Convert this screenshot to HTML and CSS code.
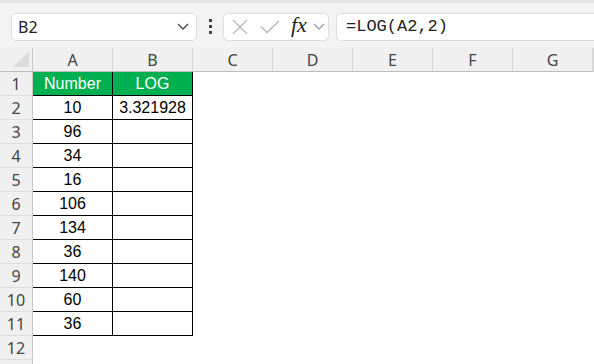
FILE: index.html
```html
<!DOCTYPE html>
<html lang="en">
<head>
  <meta charset="UTF-8">
  <title>LOG</title>
  <link rel="stylesheet" href="styles.css">
</head>
<body>
  <div class="toolbar">
    <div class="name-box">
      <span>B2</span>
      <svg class="chev" width="12" height="7" viewBox="0 0 12 7"><path d="M1 1 L6 6 L11 1" fill="none" stroke="#444" stroke-width="1.3"/></svg>
    </div>
    <div class="dots"><i></i><i></i><i></i></div>
    <div class="fx-box">
      <svg width="16" height="16" viewBox="0 0 16 16"><path d="M1 1 L15 15 M15 1 L1 15" stroke="#b5b5b5" stroke-width="1.3"/></svg>
      <svg class="check" width="20" height="14" viewBox="0 0 20 14"><path d="M1 6.5 L7 12.5 L19 1" fill="none" stroke="#b5b5b5" stroke-width="1.3"/></svg>
      <span class="fx">fx</span>
      <svg width="12" height="7" viewBox="0 0 12 7"><path d="M1 1 L6 6 L11 1" fill="none" stroke="#999" stroke-width="1.2"/></svg>
    </div>
    <div class="formula">=LOG(A2,2)</div>
  </div>

  <div class="sheet" id="sheet"></div>

  <script>
    const data = [10, 96, 34, 16, 106, 134, 36, 140, 60, 36];
    const cols = ['A', 'B', 'C', 'D', 'E', 'F', 'G', ''];
    const sheet = document.getElementById('sheet');

    function cell(cls, text) {
      const el = document.createElement('div');
      el.className = cls;
      el.textContent = text || '';
      sheet.appendChild(el);
      return el;
    }

    const corner = cell('corner');
    corner.innerHTML = '<span class="tri"></span>';
    cols.forEach(c => cell('col-head', c));

    // row 13 only peeks in at the bottom edge, so it gets no label
    for (let r = 1; r <= 13; r++) {
      cell('row-head', r <= 12 ? r : '');
      if (r === 1) {
        cell('cell head', 'Number');
        cell('cell head', 'LOG');
      } else if (r <= 11) {
        cell('cell num', data[r - 2]);
        cell('cell num', r === 2 ? '3.321928' : '');
      } else {
        cell('blank');
        cell('blank');
      }
      for (let i = 0; i < 6; i++) cell('blank');
    }
  </script>
</body>
</html>
```

FILE: styles.css
```css
* { box-sizing: border-box; }
body {
  margin: 0;
  background: #fff;
  font-family: 'Liberation Sans', Arial, sans-serif;
  color: #000;
  overflow: hidden;
}
.toolbar {
  height: 48px;
  background: #f3f3f3;
  border-top: 3px solid #e4e4e4;
  display: flex;
  align-items: center;
  padding: 0 0 0 11px;
}
.name-box {
  width: 186px;
  height: 28px;
  margin-top: 2px;
  background: #fff;
  border: 1px solid #dedede;
  border-radius: 5px;
  display: flex;
  align-items: center;
  justify-content: space-between;
  padding: 0 7px 0 6px;
  font-family: 'Noto Sans', sans-serif;
  font-size: 16px;
  color: #222;
}
.dots {
  width: 26px;
  display: flex;
  flex-direction: column;
  align-items: center;
  gap: 3px;
  margin-top: 2px;
}
.dots i {
  width: 3px;
  height: 3px;
  background: #444;
}
.fx-box {
  width: 106px;
  height: 28px;
  margin-top: 2px;
  background: #fff;
  border: 1px solid #dedede;
  border-radius: 5px;
  display: flex;
  align-items: center;
  padding: 0 0 0 8px;
}
.fx-box .check { margin-left: 12px; }
.fx {
  font-family: 'Liberation Serif', serif;
  font-style: italic;
  font-size: 22px;
  color: #222;
  margin: -4px 6px 0 11px;
}
.formula {
  flex: 1;
  height: 28px;
  margin: 2px 0 0 7px;
  background: #fff;
  border: 1px solid #dedede;
  border-right: none;
  border-radius: 5px 0 0 5px;
  padding: 0 0 0 9px;
  font-family: 'Liberation Mono', monospace;
  font-size: 17px;
  line-height: 26px;
  color: #222;
}
.sheet {
  display: grid;
  grid-template-columns: 33px repeat(7, 80px) 1fr;
  grid-auto-rows: 24px;
}
.corner {
  background: #f0f0f0;
  border-right: 1px solid #c8c8c8;
  border-bottom: 1px solid #bdbdbd;
  position: relative;
}
.tri {
  position: absolute;
  right: 3px;
  bottom: 4px;
  width: 0;
  height: 0;
  border-left: 16px solid transparent;
  border-bottom: 16px solid #dcdcdc;
}
.col-head, .row-head {
  background: #f0f0f0;
  font-family: 'Noto Sans', sans-serif;
  font-size: 16px;
  color: #444;
  display: flex;
  align-items: center;
  justify-content: center;
}
.col-head {
  border-right: 1px solid #d8d8d8;
  border-bottom: 1px solid #bdbdbd;
}
.row-head {
  border-right: 1px solid #c8c8c8;
  border-bottom: 1px solid #dedede;
}
.cell {
  font-size: 16px;
  display: flex;
  align-items: center;
  justify-content: center;
  border-right: 1px solid #000;
  border-bottom: 1px solid #000;
}
.cell.head {
  background: #00b050;
  color: #fff;
}
.blank { background: #fff; }
```
